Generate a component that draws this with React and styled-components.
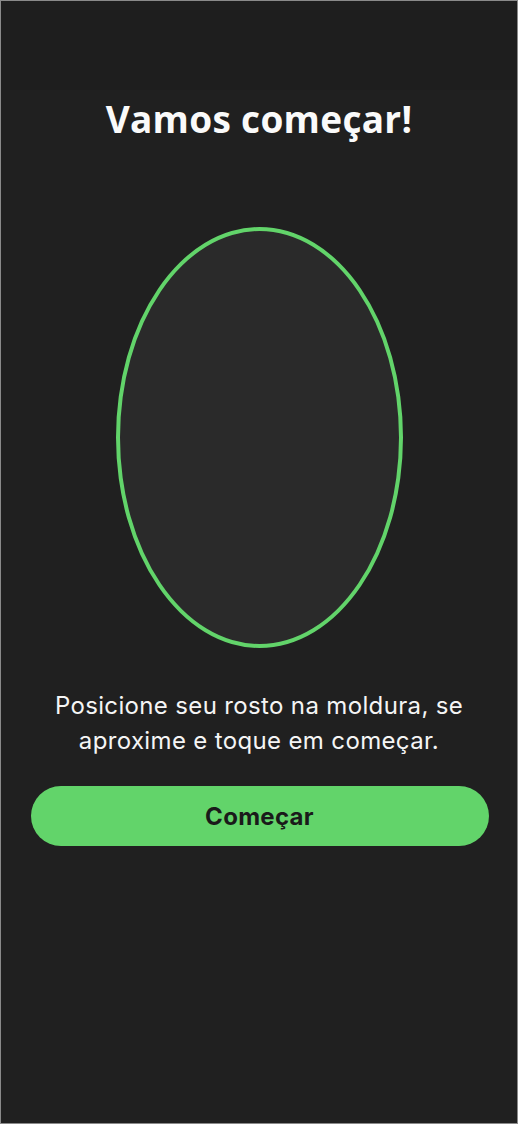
import React from 'react';
import styled, { createGlobalStyle } from 'styled-components';

const GlobalStyle = createGlobalStyle`
  html, body {
    margin: 0;
    padding: 0;
    background: #202020;
  }
  * {
    box-sizing: border-box;
  }
`;

const Screen = styled.div`
  width: 518px;
  height: 1124px;
  border: 1px solid #8a8a8a;
  background-color: #202020;
  display: flex;
  flex-direction: column;
  font-family: Inter, "Noto Sans", sans-serif;
  color: #fafafa;
`;

const StatusArea = styled.div`
  height: 89px;
  background-color: #1e1e1e;
`;

const Title = styled.h1`
  margin: 0;
  padding-top: 4px;
  text-align: center;
  font-family: "Open Sans", "Noto Sans", sans-serif;
  font-weight: 700;
  font-size: 37px;
  line-height: 50px;
  letter-spacing: 0.3px;
  color: #fafafa;
`;

const FrameWrap = styled.div`
  display: flex;
  justify-content: center;
  margin-top: 83px;
`;

const FaceFrame = styled.div`
  width: 287px;
  height: 421px;
  border-radius: 50%;
  border: 4px solid #62d46a;
  background-color: #2a2a2a;
`;

const Hint = styled.p`
  margin: 40px 0 0;
  padding: 0 30px;
  text-align: center;
  font-size: 24px;
  line-height: 35px;
  letter-spacing: 0.35px;
  font-weight: 400;
  color: #f5f5f5;
`;

const StartButton = styled.button`
  align-self: center;
  margin-top: 28px;
  margin-left: 1px;
  width: 458px;
  height: 60px;
  border: none;
  border-radius: 30px;
  background-color: #62d46a;
  color: #1a1a1a;
  font-family: Inter, "Noto Sans", sans-serif;
  font-weight: 700;
  font-size: 24px;
  letter-spacing: 0.3px;
  cursor: pointer;
`;

const App = () => {
  return (
    <>
      <GlobalStyle />
      <Screen>
        <StatusArea />
        <Title>Vamos começar!</Title>
        <FrameWrap>
          <FaceFrame />
        </FrameWrap>
        <Hint>Posicione seu rosto na moldura, se aproxime e toque em começar.</Hint>
        <StartButton>Começar</StartButton>
      </Screen>
    </>
  );
};

export default App;
